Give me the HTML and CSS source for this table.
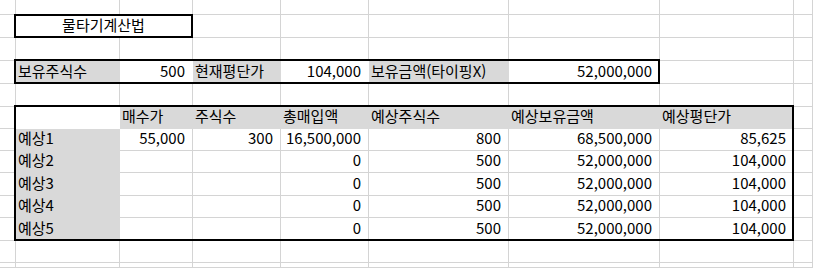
FILE: index.html
```html
<!DOCTYPE html>
<html lang="ko">
<head>
<meta charset="utf-8">
<title>물타기계산법</title>
<link rel="stylesheet" href="styles.css">
</head>
<body>
<div class="sheet">
  <div class="title-box">물타기계산법</div>

  <div class="info-box">
    <div class="cell fill">보유주식수</div>
    <div class="cell num">500</div>
    <div class="cell fill">현재평단가</div>
    <div class="cell num">104,000</div>
    <div class="cell fill">보유금액(타이핑X)</div>
    <div class="cell num lc">52,000,000</div>
  </div>

  <div class="calc-box">
    <div class="cell blank"></div>
    <div class="cell fill">매수가</div>
    <div class="cell fill">주식수</div>
    <div class="cell fill">총매입액</div>
    <div class="cell fill">예상주식수</div>
    <div class="cell fill">예상보유금액</div>
    <div class="cell fill lc">예상평단가</div>

    <div class="cell fill">예상1</div>
    <div class="cell num">55,000</div>
    <div class="cell num">300</div>
    <div class="cell num">16,500,000</div>
    <div class="cell num">800</div>
    <div class="cell num">68,500,000</div>
    <div class="cell num lc">85,625</div>

    <div class="cell fill">예상2</div>
    <div class="cell num"></div>
    <div class="cell num"></div>
    <div class="cell num">0</div>
    <div class="cell num">500</div>
    <div class="cell num">52,000,000</div>
    <div class="cell num lc">104,000</div>

    <div class="cell fill">예상3</div>
    <div class="cell num"></div>
    <div class="cell num"></div>
    <div class="cell num">0</div>
    <div class="cell num">500</div>
    <div class="cell num">52,000,000</div>
    <div class="cell num lc">104,000</div>

    <div class="cell fill">예상4</div>
    <div class="cell num"></div>
    <div class="cell num"></div>
    <div class="cell num">0</div>
    <div class="cell num">500</div>
    <div class="cell num">52,000,000</div>
    <div class="cell num lc">104,000</div>

    <div class="cell fill lr">예상5</div>
    <div class="cell num lr"></div>
    <div class="cell num lr"></div>
    <div class="cell num lr">0</div>
    <div class="cell num lr">500</div>
    <div class="cell num lr">52,000,000</div>
    <div class="cell num lr lc">104,000</div>
  </div>

  <div class="gc"></div><div class="gc"></div><div class="gc"></div><div class="gc"></div><div class="gc"></div><div class="gc"></div><div class="gc"></div><div class="gc"></div><div class="gc"></div><div class="gc"></div>
  <div class="gc"></div><div class="gc"></div><div class="gc"></div><div class="gc"></div><div class="gc"></div><div class="gc"></div><div class="gc"></div><div class="gc"></div><div class="gc"></div><div class="gc"></div>
  <div class="gc"></div><div class="gc"></div><div class="gc"></div><div class="gc"></div><div class="gc"></div><div class="gc"></div><div class="gc"></div><div class="gc"></div><div class="gc"></div><div class="gc"></div>
  <div class="gc"></div><div class="gc"></div><div class="gc"></div><div class="gc"></div><div class="gc"></div><div class="gc"></div><div class="gc"></div><div class="gc"></div><div class="gc"></div><div class="gc"></div>
  <div class="gc"></div><div class="gc"></div><div class="gc"></div><div class="gc"></div><div class="gc"></div><div class="gc"></div><div class="gc"></div><div class="gc"></div><div class="gc"></div><div class="gc"></div>
  <div class="gc"></div><div class="gc"></div><div class="gc"></div><div class="gc"></div><div class="gc"></div><div class="gc"></div><div class="gc"></div><div class="gc"></div><div class="gc"></div><div class="gc"></div>
  <div class="gc"></div><div class="gc"></div><div class="gc"></div><div class="gc"></div><div class="gc"></div><div class="gc"></div><div class="gc"></div>
</div>
</body>
</html>
```

FILE: styles.css
```css
* {
  box-sizing: border-box;
}

html,
body {
  margin: 0;
  padding: 0;
  background: #fff;
}

body {
  font-family: "Noto Sans CJK KR", "Noto Sans", sans-serif;
  font-size: 15px;
  line-height: 15px;
  color: #000;
}

.sheet {
  display: grid;
  grid-template-columns: 16px 104px 73px 88px 88px 140px 151px 134px 1fr;
  grid-template-rows: 15px 23px 23px 23px 23px 22px 22px 22px 23px 22px 23px 22px 1fr;
  height: 100vh;
  overflow: hidden;
}

.gc {
  border-right: 1px solid #d4d4d4;
  border-bottom: 1px solid #d4d4d4;
}

.title-box {
  grid-row: 2;
  grid-column: 2 / 4;
  margin: -1px 0 0 -2px;
  border: 2px solid #000;
  background: #fff;
  z-index: 1;
  display: flex;
  align-items: flex-end;
  justify-content: center;
  padding-bottom: 4px;
  white-space: nowrap;
}

.info-box {
  grid-row: 4;
  grid-column: 2 / 8;
  margin: -2px 0 0 -2px;
  border: 2px solid #000;
  background: #fff;
  z-index: 1;
  display: grid;
  grid-template-columns: 104px 73px 88px 88px 140px 1fr;
}

.calc-box {
  grid-row: 6 / 12;
  grid-column: 2 / 9;
  margin: -2px 0 0 -2px;
  border: 2px solid #000;
  background: #fff;
  z-index: 1;
  display: grid;
  grid-template-columns: 104px 73px 88px 88px 140px 151px 1fr;
  grid-template-rows: 22px 22px 22px 23px 22px 1fr;
}

.cell {
  display: flex;
  align-items: flex-end;
  min-width: 0;
  padding: 0 7px 5px 2px;
  border-right: 1px solid #d4d4d4;
  border-bottom: 1px solid #d4d4d4;
  white-space: nowrap;
}

.info-box .cell {
  border-bottom: 0;
  padding-bottom: 4px;
  border-right-color: #fff;
}

.fill {
  background: #d9d9d9;
}

.cell.fill {
  border-color: #d9d9d9;
}

.cell.blank {
  border-color: transparent;
}

.num {
  justify-content: flex-end;
}

.cell.lc {
  border-right: 0;
  padding-right: 6px;
}

.cell.lr {
  border-bottom: 0;
  padding-bottom: 4px;
}
```
